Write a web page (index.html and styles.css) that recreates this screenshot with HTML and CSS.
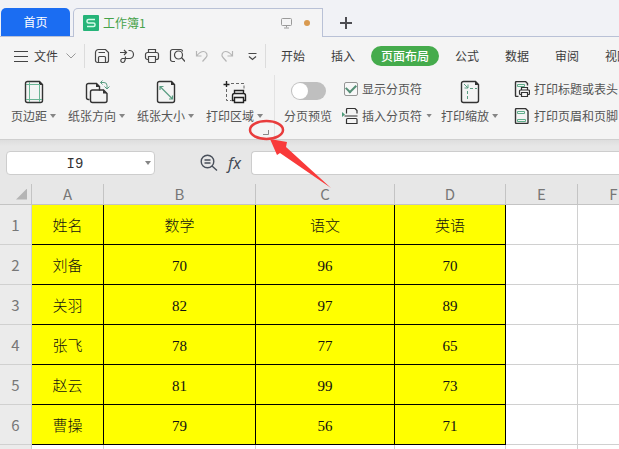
FILE: index.html
```
<!DOCTYPE html>
<html lang="zh-CN">
<head>
<meta charset="utf-8">
<title>工作簿1</title>
<link rel="stylesheet" href="styles.css">
</head>
<body>
<header class="tabbar">
  <button class="home-tab">首页</button>
  <div class="doc-tab">
    <svg class="logo" width="16" height="16" viewBox="0 0 16 16"><rect width="16" height="16" rx="1" fill="#26b479"/><path d="M12 4.500H5.500a1.500 1.500 0 0 0-1.500 1.500v.5A1.500 1.500 0 0 0 5.500 8h5A1.500 1.500 0 0 1 12 9.500V10a1.500 1.500 0 0 1-1.500 1.500H4" fill="none" stroke="#d4fbe8" stroke-width="1.500"/></svg>
    <span class="doc-name">工作簿1</span>
    <svg width="12" height="12" viewBox="0 0 12 12" fill="none" stroke="#9a9a9a"><rect x="1.500" y="1.500" width="10" height="7" rx="1"/><path d="M6.500 8.500v2M4 11h5"/></svg>
    <span class="dirty"></span>
  </div>
  <button class="new-tab" aria-label="新建"><svg width="14" height="14" viewBox="0 0 14 14" stroke="#4d4d52" stroke-width="2"><path d="M7 1v12M1 7h12"/></svg></button>
</header>

<nav class="menu">
  <button class="file">
    <svg width="14" height="12" viewBox="0 0 14 12" stroke="#444"><path d="M0 1.500h14M0 6.500h14M0 11.500h14"/></svg>
    文件
    <svg width="10" height="6" viewBox="0 0 10 6" fill="none" stroke="#999"><path d="M.5.500 5 5 9.500.500"/></svg>
  </button>
  <div class="quick">
    <button aria-label="保存"><svg width="16" height="16" viewBox="0 0 16 16"><path d="M1.500 12.500v-8a3 3 0 0 1 3-3h7l3 3v8a2 2 0 0 1-2 2h-9a2 2 0 0 1-2-2zM4.500 14.500v-5a1 1 0 0 1 1-1h5a1 1 0 0 1 1 1v5M4.500 4.500h6.500"/></svg></button>
    <button aria-label="输出"><svg width="16" height="16" viewBox="0 0 16 16"><path d="M1 4.500h6M5 2l2.500 2.500L5 7M9.500 2.500h1a4 4 0 0 1 0 8H3.500a2 2 0 1 0 2 3c1-1.500 1-3 1-5"/></svg></button>
    <button aria-label="打印"><svg width="16" height="16" viewBox="0 0 16 16"><path d="M4.500 4.500v-3h7v3M4.500 11.500h-1a2 2 0 0 1-2-2v-3a2 2 0 0 1 2-2h9a2 2 0 0 1 2 2v3a2 2 0 0 1-2 2h-1M4.500 8.500h7v5a1 1 0 0 1-1 1h-5a1 1 0 0 1-1-1z"/></svg></button>
    <button aria-label="打印预览"><svg width="16" height="16" viewBox="0 0 16 16"><path d="M6 13.500H3.500a2 2 0 0 1-2-2v-8a2 2 0 0 1 2-2h8a2 2 0 0 1 2 2M12.500 9.500 16 13.500"/><circle cx="9.500" cy="7" r="4"/></svg></button>
    <button class="off" aria-label="撤销"><svg width="16" height="16" viewBox="0 0 16 16"><path d="M2.500 3v5h5M3 7.500C5 5 7 3.500 9.500 3.500a3.500 3.500 0 0 1 2.500 6L8.500 13.500"/></svg></button>
    <button class="off" aria-label="恢复"><svg width="16" height="16" viewBox="0 0 16 16"><path d="M13.500 3v5h-5M13 7.500C11 5 9 3.500 6.500 3.500a3.500 3.500 0 0 0-2.500 6L7.500 13.500"/></svg></button>
    <button aria-label="更多"><svg width="16" height="16" viewBox="0 0 16 16"><path d="M4.500 5.500h8M5 8.500l3.500 3 3.500-3"/></svg></button>
  </div>
  <div class="tabs">
    <a href="#">开始</a><a href="#">插入</a><a href="#" class="active">页面布局</a><a href="#">公式</a><a href="#">数据</a><a href="#">审阅</a><a href="#">视图</a>
  </div>
</nav>

<section class="ribbon">
  <div class="group">
    <button class="tool">
      <svg width="26" height="24" viewBox="0 0 26 24" fill="none"><path d="M4.500 3.500a2 2 0 0 1 2-2h12l3 3v16a2 2 0 0 1-2 2h-13a2 2 0 0 1-2-2z" stroke="#333" stroke-width="1.400"/><path d="M18 1v4h4z" fill="#333"/><path d="M8.500 2v20M18.500 5v17M5 4.500h14M5 19.500h16" stroke="#6bb595"/></svg>
      <span>页边距<i class="caret"></i></span>
    </button>
    <button class="tool">
      <svg width="26" height="24" viewBox="0 0 26 24" fill="none"><path d="M5.500 19.500h-1a2 2 0 0 1-2-2v-12a2 2 0 0 1 2-2h8l3 3v4" stroke="#333" stroke-width="1.400"/><path d="M12 3v4h4z" fill="#333"/><path d="M6.500 12a2 2 0 0 1 2-2h11l3.500 3.500v7a2 2 0 0 1-2 2H8.500a2 2 0 0 1-2-2z" stroke="#333" stroke-width="1.400"/><path d="M19 9.500v4h4z" fill="#333"/><path d="M16.500 2.500H20a3 3 0 0 1 3 3v3M18.500.500l-2 2 2 2M20.500 6.500l2.500 2.500 2.500-2.500" stroke="#5a9d82"/></svg>
      <span>纸张方向<i class="caret"></i></span>
    </button>
    <button class="tool">
      <svg width="26" height="24" viewBox="0 0 26 24" fill="none"><path d="M4.500 3.500a2 2 0 0 1 2-2h12l3 3v16a2 2 0 0 1-2 2h-13a2 2 0 0 1-2-2z" stroke="#333" stroke-width="1.400"/><path d="M18 1v4h4z" fill="#333"/><path d="M7 6.500 19.500 19M7 10V6.500h3.500M19.500 15.500V19H16" stroke="#5a9d82" stroke-width="1.200"/></svg>
      <span>纸张大小<i class="caret"></i></span>
    </button>
    <button class="tool">
      <svg width="26" height="24" viewBox="0 0 26 24" fill="none"><path d="M4.500 1v6M1.500 4.500h6" stroke="#222" stroke-width="1.400"/><path d="M9 3.500h13v6M4.500 9v11.500h5" stroke="#666" stroke-dasharray="3 2"/><g stroke="#222" stroke-width="1.400"><path d="M12.500 14v-3.500h9V14M12.500 20.500h-2v-5a2 2 0 0 1 2-2h9a2 2 0 0 1 2 2v5h-2M12.500 17.500h9v5h-9z"/></g></svg>
      <span>打印区域<i class="caret"></i></span>
    </button>
  </div>
  <div class="group preview">
    <label class="tool"><input type="checkbox" class="switch"><span>分页预览</span></label>
    <div class="stack">
      <label><input type="checkbox" class="check" checked>显示分页符</label>
      <button><svg width="16" height="16" viewBox="0 0 16 16" fill="none"><path d="M0 4v5l3-2.500z" fill="#4c9b78"/><path d="M4.500 5.500V1.500a1 1 0 0 1 1-1h7.500l2 2v3M4.500 15.500V11.500a1 1 0 0 1 1-1H14a1 1 0 0 1 1 1v4zM2.500 8h13" stroke="#333" stroke-width="1.200"/></svg>插入分页符<i class="caret"></i></button>
    </div>
    <button class="tool">
      <svg width="26" height="24" viewBox="0 0 26 24" fill="none"><path d="M4.500 3.500a2 2 0 0 1 2-2h12l3 3v16a2 2 0 0 1-2 2h-13a2 2 0 0 1-2-2z" stroke="#333" stroke-width="1.400"/><path d="M18 1v4h4z" fill="#333"/><path d="M7 4l4 4M11 4.500V8H7.500" stroke="#5a9d82"/><path d="M13 8.500h7M10.500 11v10" stroke="#5a9d82" stroke-dasharray="3 2"/></svg>
      <span>打印缩放<i class="caret"></i></span>
    </button>
    <div class="stack titles">
      <button><svg width="16" height="16" viewBox="0 0 16 16" fill="none"><path d="M4.500 15.500h-2a1 1 0 0 1-1-1v-13a1 1 0 0 1 1-1h9l2 2v2" stroke="#333" stroke-width="1.400"/><path d="M3.500 3.500h7v2h-7z" stroke="#5fae8b"/><path d="M7.500 9V6.500h6V9M7.500 13.500h-1a1 1 0 0 1-1-1V10a1 1 0 0 1 1-1h8a1 1 0 0 1 1 1v2.500a1 1 0 0 1-1 1h-1M7.500 11.500h6v4h-6z" stroke="#333" stroke-width="1.200"/></svg>打印标题或表头</button>
      <button><svg width="16" height="16" viewBox="0 0 16 16" fill="none"><path d="M1.500 1.500a1 1 0 0 1 1-1h9l2.500 2.500v11.500a1 1 0 0 1-1 1H2.500a1 1 0 0 1-1-1z" stroke="#333" stroke-width="1.400"/><path d="M3.500 3.500h7v2h-7zM3.500 11.500h8v2h-8z" stroke="#5fae8b"/></svg>打印页眉和页脚</button>
    </div>
  </div>
</section>

<section class="formula">
  <div class="namebox"><input type="text" value="I9" aria-label="名称框"><button aria-label="选择名称"><i class="caret"></i></button></div>
  <button class="fbtn" aria-label="查找"><svg width="18" height="18" viewBox="0 0 18 18" fill="none" stroke="#484f5a" stroke-width="1.400"><circle cx="7.500" cy="7.500" r="6.300"/><path d="M12 12l5 4.500M4.500 6h6M4.500 9h6"/></svg></button>
  <button class="fbtn fx">fx</button>
  <input class="finput" type="text" aria-label="编辑栏">
</section>

<main class="sheet">
<table>
  <colgroup><col class="c0"><col class="cs"><col class="cb"><col class="cc"><col class="cd"><col class="cs"><col class="cs"></colgroup>
  <thead><tr><th><i class="corner"></i></th><th>A</th><th>B</th><th>C</th><th>D</th><th>E</th><th>F</th></tr></thead>
  <tbody>
  <tr class="data"><th>1</th><td>姓名</td><td>数学</td><td>语文</td><td>英语</td><td></td><td></td></tr>
  <tr class="data"><th>2</th><td>刘备</td><td>70</td><td>96</td><td>70</td><td></td><td></td></tr>
  <tr class="data"><th>3</th><td>关羽</td><td>82</td><td>97</td><td>89</td><td></td><td></td></tr>
  <tr class="data"><th>4</th><td>张飞</td><td>78</td><td>77</td><td>65</td><td></td><td></td></tr>
  <tr class="data"><th>5</th><td>赵云</td><td>81</td><td>99</td><td>73</td><td></td><td></td></tr>
  <tr class="data"><th>6</th><td>曹操</td><td>79</td><td>56</td><td>71</td><td></td><td></td></tr>
  <tr><th></th><td></td><td></td><td></td><td></td><td></td><td></td></tr>
  </tbody>
</table>
</main>

<svg class="callout" width="90" height="74" viewBox="0 0 90 74"><path d="M22.500 14v4.500H17" fill="none" stroke="#888"/><ellipse cx="20.500" cy="14" rx="16.500" ry="9" fill="none" stroke="#e83c3c" stroke-width="2.500"/><path d="M24 23 41 26 40 31 85 72 34 37 31 39z" fill="#f93a3a"/></svg>
</body>
</html>
```
FILE: styles.css
```
* { box-sizing: border-box; }
body {
  margin: 0;
  position: relative;
  height: 100vh;
  overflow: hidden;
  display: flex;
  flex-direction: column;
  background: #fff;
  color: #3c3c3c;
  font: 12px/16px "Noto Sans CJK SC", sans-serif;
}
button, input { font: inherit; color: inherit; margin: 0; padding: 0; border: 0; background: none; }
button, label { white-space: nowrap; }
svg { display: block; flex: none; }

.tabbar {
  display: flex;
  flex: none;
  height: 37px;
  padding: 8px 0 0 1px;
  background: #f1f2f6;
  box-shadow: inset 0 -1px #b9c1d6;
}
.home-tab {
  width: 69px;
  margin: 0 3px 1px 0;
  border-radius: 5px 5px 0 0;
  background: #1b6df2;
  color: #fff;
}
.doc-tab {
  display: flex;
  align-items: center;
  width: 250px;
  padding: 0 12px 0 9px;
  border: 1px solid #b9c1d6;
  border-bottom: 0;
  border-radius: 5px 0 0 0;
  background: #f4f4f5;
  color: #46a24a;
}
.doc-name { flex: 1; margin-left: 4px; }
.dirty { width: 6px; height: 6px; margin-left: 12px; border-radius: 50%; background: #d99a50; }
.new-tab { padding: 0 16px; }

.menu { display: flex; flex: none; align-items: center; height: 38px; background: #f4f4f4; }
.file { display: flex; align-items: center; gap: 6px; height: 24px; padding: 0 8px 0 14px; border-right: 1px solid #dcdcdc; }
.file svg:last-child { margin-left: 2px; }
.quick { display: flex; flex: none; height: 24px; padding: 0 1px 0 4px; border-right: 1px solid #dcdcdc; }
.quick button { display: grid; place-items: center; width: 25px; }
.quick svg { fill: none; stroke: #484848; stroke-width: 1.2; }
.quick .off svg { stroke: #b5b5b5; }
.tabs { display: flex; gap: 6px; padding-left: 5px; }
.tabs a { flex: none; padding: 2px 10px; border-radius: 10px; color: inherit; text-decoration: none; }
.tabs .active { background: #45ab4c; color: #fff; font-weight: 500; }

.ribbon {
  display: flex;
  flex: none;
  height: 65px;
  border-bottom: 1px solid #cfcfcf;
  background: #f4f4f4;
  color: #555;
}
.group { display: flex; flex: none; gap: 12px; align-items: flex-start; padding: 5px 11px 0 11px; }
.preview { gap: 10px; padding: 5px 0 0 10px; border-left: 1px solid #e2e2e2; }
.preview .tool:last-of-type { margin-left: -1px; }
.tool { display: flex; flex-direction: column; align-items: center; gap: 4px; }
.tool span { display: flex; align-items: center; }
.caret {
  flex: none;
  width: 6px;
  height: 4px;
  margin-left: 3px;
  background: #858585;
  clip-path: polygon(0 0, 100% 0, 50% 100%);
}
.switch {
  appearance: none;
  display: flex;
  width: 35px;
  height: 18px;
  margin: 2px 0 4px;
  border-radius: 9px;
  background: #bfbfbf;
}
.switch::before { content: ""; width: 16px; height: 16px; margin: 1px; border-radius: 50%; background: #fff; }
.stack { display: flex; flex-direction: column; gap: 10px; }
.stack > * { display: flex; align-items: center; gap: 4px; height: 17px; }
.stack .caret { margin-left: 0; }
.titles { padding-left: 6px; }
.check { appearance: none; display: grid; place-items: center; width: 14px; height: 14px; margin-left: 2px; border: 1px solid #969696; border-radius: 2px; background: #f8f8f8; }
.check:checked::before { content: ""; width: 8px; height: 5px; margin-bottom: 2px; border: solid #568f76; border-width: 0 0 2px 2px; transform: rotate(-45deg); }

.formula {
  display: flex;
  flex: none;
  align-items: center;
  height: 44px;
  padding: 2px 0 0 6px;
  background: linear-gradient(#dedede, #e7e7e7 6px);
}
.namebox { display: flex; width: 149px; height: 24px; border: 1px solid #cdcdcd; border-radius: 4px; background: #fff; }
.namebox input { flex: 1; min-width: 0; padding: 2px 2px 0 0; text-align: center; font: 14px/16px "Liberation Mono", monospace; color: #333; }
.namebox button { width: 9px; }
.namebox .caret { display: block; margin: 0; }
.fbtn { margin-left: 45px; }
.fx { margin: 0 8px; width: 17px; font: italic 16px/24px "Noto Sans", sans-serif; color: #444b57; }
.finput { flex: 1; min-width: 0; height: 24px; border: 1px solid #cdcdcd; border-right: 0; border-radius: 4px 0 0 4px; background: #fff; }

.sheet { flex: 1; overflow: hidden; }
table { width: 650px; table-layout: fixed; border-collapse: separate; border-spacing: 0; }
.c0 { width: 32px; }
.cs { width: 72px; }
.cb { width: 152px; }
.cc { width: 139px; }
.cd { width: 111px; }
th, td { height: 40px; padding: 0; border: solid #d0d0d0; border-width: 0 1px 1px 0; text-align: center; }
th { background: #ebebeb; color: #777; font: 15px/20px "Noto Sans CJK SC", sans-serif; }
thead th { height: 21px; background: #e7e7e7; border-color: #c4c4c4; }
td { padding-top: 2px; color: #111; font: 300 15px/20px "Liberation Serif", "Noto Sans CJK SC", serif; }
.data td:nth-child(-n+5) { background: #ff0; border-color: #000; }
.corner { display: block; width: 11px; height: 11px; margin: 0 0 0 16px; background: #b5b5b5; clip-path: polygon(100% 0, 100% 100%, 0 100%); }

.callout { position: absolute; left: 246px; top: 116px; pointer-events: none; }
```
